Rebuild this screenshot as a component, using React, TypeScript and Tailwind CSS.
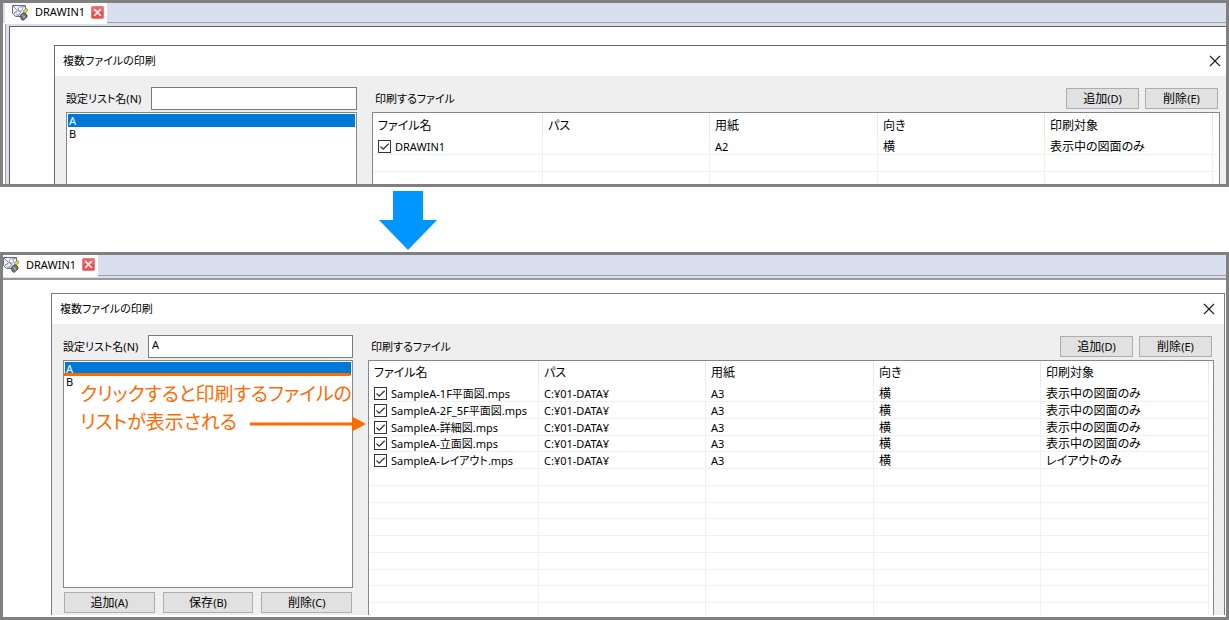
import { useState } from "react";

type Row = {
  name: string;
  path: string;
  paper: string;
  direction: string;
  target: string;
};

const currentFiles: Row[] = [
  { name: "DRAWIN1", path: "", paper: "A2", direction: "横", target: "表示中の図面のみ" },
];

const listFiles: Row[] = [
  { name: "SampleA-1F平面図.mps", path: "C:¥01-DATA¥", paper: "A3", direction: "横", target: "表示中の図面のみ" },
  { name: "SampleA-2F_5F平面図.mps", path: "C:¥01-DATA¥", paper: "A3", direction: "横", target: "表示中の図面のみ" },
  { name: "SampleA-詳細図.mps", path: "C:¥01-DATA¥", paper: "A3", direction: "横", target: "表示中の図面のみ" },
  { name: "SampleA-立面図.mps", path: "C:¥01-DATA¥", paper: "A3", direction: "横", target: "表示中の図面のみ" },
  { name: "SampleA-レイアウト.mps", path: "C:¥01-DATA¥", paper: "A3", direction: "横", target: "レイアウトのみ" },
];

const headers = ["ファイル名", "パス", "用紙", "向き", "印刷対象"];

function DrawingIcon() {
  return (
    <svg width="16" height="17" viewBox="0 0 16 17" className="shrink-0" aria-hidden="true">
      <path d="M0.5 1.5H13.5V12.5H3.5L0.5 9.5Z" fill="#f1f2f5" stroke="#6a6d73" />
      <path d="M1 2L5.5 6.5L1.5 10M6 7L9 3.5L13 2M6 12L9 8L5.5 6.5" fill="none" stroke="#6d86c9" strokeWidth="1" />
      <circle cx="8.5" cy="5" r="2.2" fill="#ffffff" stroke="#7d8fc8" strokeWidth="0.8" />
      <path d="M2 8.5H4.5M3.5 11H7" stroke="#9a9da4" />
      <path d="M14 4L16 6L13 10L11 8Z" fill="#e8d62c" stroke="#77701c" strokeWidth="0.6" />
      <path d="M8.5 11L12 8.5L15 11V13L11 16.5L9 15Z" fill="#77797d" stroke="#2b2d30" strokeWidth="0.7" />
      <path d="M10.5 11.5L13 13.5" stroke="#c8cacc" />
    </svg>
  );
}

function TabCloseIcon() {
  return (
    <svg width="13" height="13" viewBox="0 0 13 13" aria-hidden="true">
      <rect x="0.5" y="0.5" width="12" height="12" rx="1" fill="#f04a4c" stroke="#dd8485" />
      <path d="M1 1H12V6H1Z" fill="#f4787a" opacity="0.6" />
      <path d="M3.2 3.2L9.8 9.8M9.8 3.2L3.2 9.8" stroke="#ffe9e9" strokeWidth="1.9" />
    </svg>
  );
}

function TabBar({ framed }: { framed: boolean }) {
  return (
    <div className={framed ? "flex h-[20px] items-stretch bg-[#d9dfee] pl-[2px]" : "flex h-[21px] items-stretch bg-[#d9dfee]"}>
      <div
        className={
          "relative z-10 -mb-px flex items-center bg-white pr-[3px] pb-[3px] " + (framed ? "pl-[7px]" : "pl-0")
        }
      >
        <DrawingIcon />
        <span className="w-[56px] pl-[7px] text-[11px] leading-4">DRAWIN1</span>
        <button type="button" aria-label="タブを閉じる" className="ml-[7px]">
          <TabCloseIcon />
        </button>
      </div>
      <div className="flex-1 border-b border-[#a0a0a0]" />
    </div>
  );
}

function DialogButton({ label, hotkey, className }: { label: string; hotkey: string; className: string }) {
  return (
    <button
      type="button"
      className={"flex h-[21px] items-center justify-center border border-[#adadad] bg-[#e1e1e1] leading-4 " + className}
    >
      <span className="text-[12px]">{label}</span>
      <span className="text-[11px]">({hotkey})</span>
    </button>
  );
}

function CheckBox({ label }: { label: string }) {
  const [on, setOn] = useState(true);
  return (
    <span className="grid shrink-0">
      <input
        type="checkbox"
        aria-label={label}
        checked={on}
        onChange={() => setOn(!on)}
        className="col-start-1 row-start-1 size-[13px] appearance-none border border-[#333333] bg-white"
      />
      {on && (
        <svg width="13" height="13" viewBox="0 0 13 13" className="pointer-events-none col-start-1 row-start-1" aria-hidden="true">
          <path d="M2.5 6.5L5.2 9.2L10.7 3.7" fill="none" stroke="#333333" strokeWidth="1.3" />
        </svg>
      )}
    </span>
  );
}

type TableProps = { rows: Row[]; count: number; className: string; headClass: string };

function FileTable({ rows, count, className, headClass }: TableProps) {
  const blanks = Array.from({ length: count - rows.length }, (_, i) => i);
  const cell = "border-r border-b border-[#f0f0f0] p-0 pl-[5px]";
  return (
    <div className={"overflow-hidden border border-b-0 border-[#828790] bg-white pr-[2px] " + className}>
      <table className="w-full table-fixed border-separate border-spacing-0 text-left text-[12px] leading-4">
        <colgroup>
          <col className="w-[170px]" />
          <col className="w-[167px]" />
          <col className="w-[168px]" />
          <col className="w-[167px]" />
          <col className="w-[168px]" />
          <col />
        </colgroup>
        <thead>
          <tr className={headClass}>
            {headers.map((h) => (
              <th key={h} scope="col" className="border-r border-[#e8e8e8] p-0 pl-[5px] font-normal">
                {h}
              </th>
            ))}
            <td className="p-0" />
          </tr>
        </thead>
        <tbody>
          {rows.map((r) => (
            <tr key={r.name} className="h-[17px] [&:nth-child(4n)]:h-4">
              <td className={cell}>
                <div className="flex h-[15px] items-center gap-1 text-[11px] leading-[15px] whitespace-nowrap">
                  <CheckBox label={r.name} />
                  {r.name}
                </div>
              </td>
              <td className={cell + " text-[11px] leading-[15px]"}>{r.path}</td>
              <td className={cell + " text-[11px] leading-[15px]"}>{r.paper}</td>
              <td className={cell + " leading-[15px]"}>{r.direction}</td>
              <td className={cell + " leading-[15px] whitespace-nowrap"}>{r.target}</td>
              <td className="border-b border-[#f0f0f0] p-0" />
            </tr>
          ))}
          {blanks.map((i) => (
            <tr key={i} className="h-[17px] [&:nth-child(4n)]:h-4">
              {headers.map((h) => (
                <td key={h} className={cell} />
              ))}
              <td className="border-b border-[#f0f0f0] p-0" />
            </tr>
          ))}
        </tbody>
      </table>
    </div>
  );
}

function ListBox({ className }: { className: string }) {
  return (
    <ul role="listbox" aria-label="設定リスト" className={"border border-[#828790] bg-white p-px text-[11px] leading-[13px] " + className}>
      <li role="option" aria-selected="true" className="bg-[#0078d7] pl-px text-white">
        A
      </li>
      <li role="option" aria-selected="false" className="pl-px">
        B
      </li>
    </ul>
  );
}

function DialogTitle({ className }: { className: string }) {
  return (
    <header className={"flex h-[30px] items-center justify-between bg-white pl-2 " + className}>
      <h2 className="text-[11px] leading-4">複数ファイルの印刷</h2>
      <button type="button" aria-label="閉じる">
        <svg width="12" height="12" viewBox="0 0 12 12" aria-hidden="true">
          <path d="M1 1L11 11M11 1L1 11" stroke="#1a1a1a" strokeWidth="1.1" />
        </svg>
      </button>
    </header>
  );
}

function ListNameField({ id, value }: { id: string; value: string }) {
  return (
    <div className="mb-[2px] flex h-[23px] items-center">
      <label htmlFor={id} className="w-[85px] shrink-0 text-[11px] leading-4 whitespace-nowrap">
        設定リスト名(N)
      </label>
      <input
        id={id}
        type="text"
        defaultValue={value}
        className="h-[23px] min-w-0 flex-1 border border-[#7a7a7a] bg-white px-[3px] pb-1 text-[11px] outline-none"
      />
    </div>
  );
}

function FilesHeading() {
  return (
    <div className="mb-[2px] flex h-[23px] items-center gap-[6px] pr-[2px] pl-[3px]">
      <h3 className="flex-1 text-[11px] leading-4">印刷するファイル</h3>
      <DialogButton label="追加" hotkey="D" className="w-[73px]" />
      <DialogButton label="削除" hotkey="E" className="w-[73px]" />
    </div>
  );
}

function Callout() {
  return (
    <div className="pointer-events-none absolute top-[38px] left-px z-10 text-[#ff6a00]">
      <div className="h-[3px] w-[286px] bg-[#ff6a00]" />
      <p className="pt-1 pl-4 text-[19px] leading-7 whitespace-nowrap">
        クリックすると印刷するファイルの
        <br />
        リストが表示される
      </p>
      <svg width="116" height="16" viewBox="0 0 116 16" className="absolute top-[43px] left-[186px]" aria-hidden="true">
        <path d="M0 6.5H102V0.5L116 8L102 15.5V9.5H0Z" fill="#ff6a00" />
      </svg>
    </div>
  );
}

function BeforeWindow() {
  return (
    <section className="overflow-hidden border-[3px] border-[#808080] bg-white">
      <TabBar framed />
      <div className="ml-[2px] border-l border-[#a0a0a0] bg-[#d9dfee] pt-[3px] pl-[3px]">
        <div className="border-t border-l border-[#606060] bg-white pt-[18px] pl-[44px]">
          <div className="border-t border-l border-[#6b6b6b] bg-[#efefef]">
            <DialogTitle className="pr-[5px]" />
            <div className="flex gap-[15px] pt-[11px] pr-[6px] pl-[11px]">
              <div className="w-[291px] shrink-0">
                <ListNameField id="list-name-before" value="" />
                <ListBox className="h-[72px] border-b-0" />
              </div>
              <div className="min-w-0 flex-1">
                <FilesHeading />
                <FileTable rows={currentFiles} count={3} className="h-[72px]" headClass="h-[25px]" />
              </div>
            </div>
          </div>
        </div>
      </div>
    </section>
  );
}

function AfterWindow() {
  return (
    <section className="overflow-hidden border-[3px] border-[#808080] bg-white">
      <TabBar framed={false} />
      <div className="h-[2px] bg-[#d9dfee]" />
      <div className="border-t-2 border-[#999a9e] bg-white pt-[13px] pr-px pb-[2px] pl-[48px]">
        <div className="border border-b-0 border-[#7c7c7c] bg-[#efefef]">
          <DialogTitle className="pr-[9px]" />
          <div className="flex gap-[15px] pt-[11px] pr-[10px] pl-[11px]">
            <div className="relative w-[290px] shrink-0">
              <ListNameField id="list-name-after" value="A" />
              <ListBox className="h-[228px]" />
              <Callout />
              <div className="flex gap-2 px-px pt-1">
                <DialogButton label="追加" hotkey="A" className="flex-1" />
                <DialogButton label="保存" hotkey="B" className="flex-1" />
                <DialogButton label="削除" hotkey="C" className="flex-1" />
              </div>
            </div>
            <div className="min-w-0 flex-1">
              <FilesHeading />
              <FileTable rows={listFiles} count={14} className="h-[255px]" headClass="h-6" />
            </div>
          </div>
        </div>
      </div>
    </section>
  );
}

export default function App() {
  return (
    <main className="bg-white font-['Noto_Sans','Noto_Sans_CJK_JP',sans-serif] text-black [font-feature-settings:'palt']">
      <BeforeWindow />
      <div className="h-[65px] pt-1 pl-[379px]">
        <svg width="58" height="59" viewBox="0 0 58 59" aria-hidden="true">
          <path d="M14 0H44V29H58L29 59L0 29H14Z" fill="#0096ff" />
        </svg>
      </div>
      <AfterWindow />
    </main>
  );
}
